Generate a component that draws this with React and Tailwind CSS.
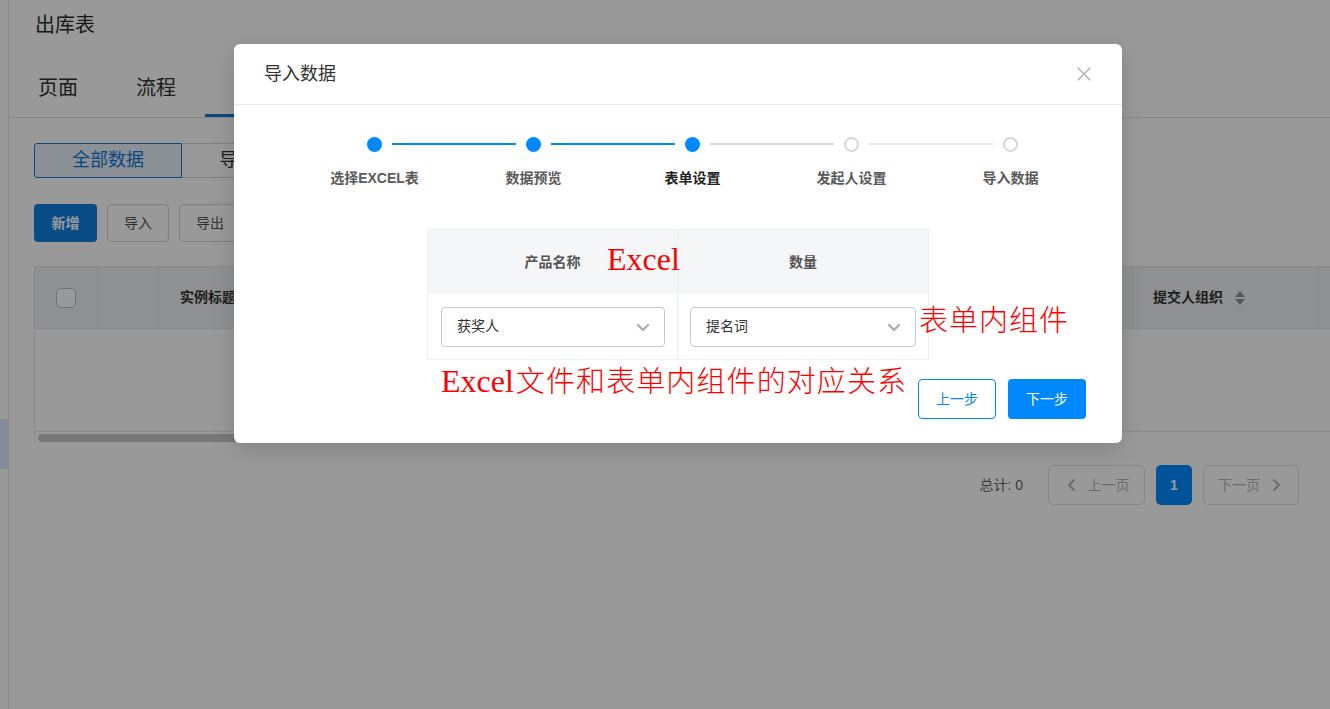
import React from "react";

const FONT = { fontFamily: '"Liberation Sans","Noto Sans CJK SC",sans-serif' };
const SERIF = { fontFamily: '"Liberation Serif",serif' };
const CJK = { fontFamily: '"Noto Sans CJK SC",sans-serif' };

function Chevron({ className = "", w = 2 }) {
  return (
    <svg className={className} width="16" height="16" viewBox="0 0 16 16" fill="none">
      <path d="M3 6l5 5 5-5" stroke="currentColor" strokeWidth={w} strokeLinecap="round" strokeLinejoin="round" />
    </svg>
  );
}

function Step({ state, label, line }) {
  return (
    <div className="relative flex w-[159px] flex-col items-center">
      <div className="relative flex h-[16px] w-full items-center justify-center">
        {state === "todo" ? (
          <div className="h-[15px] w-[15px] rounded-full border-2 border-[#d3d7dd] bg-white" />
        ) : (
          <div className="h-[15px] w-[15px] rounded-full bg-[#0089ff]" />
        )}
        {line && (
          <div className={`absolute left-[97px] top-[7px] h-[2px] w-[124px] ${line}`} />
        )}
      </div>
      <div
        className={`mt-[16px] text-[14px] font-bold leading-[20px] ${state === "current" ? "text-[#222]" : "text-[#5a5a5a]"}`}
      >
        {label}
      </div>
    </div>
  );
}

function Select({ value }) {
  return (
    <div className="flex h-[40px] w-full items-center justify-between rounded-[4px] border border-[#c3c9d2] bg-white pl-[15px] pr-[13px]">
      <span className="text-[14px] text-[#333]">{value}</span>
      <Chevron className="text-[#a9b0ba]" w={2.4} />
    </div>
  );
}

export default function App() {
  return (
    <div className="relative h-[709px] w-[1330px] overflow-hidden bg-white" style={FONT}>
      <div className="flex h-full">
        <aside className="flex w-[9px] flex-col border-r border-[#e6e6e6] bg-[#fdfdfd]">
          <div className="h-[419px]" />
          <div className="h-[50px] bg-[#dcecff]" />
        </aside>
        <main className="flex min-w-0 flex-1 flex-col">
          <div className="flex h-[50px] items-center pl-[26px] text-[20px] text-[#2a2a2a]">出库表</div>
          <div className="flex h-[68px] items-stretch border-b border-[#e4e4e4]">
            <div className="flex items-center px-[29px] pt-[8px] text-[20px] text-[#333]">页面</div>
            <div className="flex items-center px-[29px] pt-[8px] text-[20px] text-[#333]">流程</div>
            <div className="w-[98px] border-b-[3px] border-[#1677d2]" />
          </div>
          <div className="flex flex-col px-[25px]">
            <div className="mt-[25px] flex h-[35px]">
              <div className="flex w-[148px] items-center justify-center rounded-l-[3px] border border-[#1677d2] bg-[#e6f1fb] text-[18px] text-[#1677d2]">全部数据</div>
              <div className="flex w-[148px] items-center justify-center rounded-r-[3px] border border-l-0 border-[#d4d4d4] text-[18px] text-[#333]">导入记录</div>
            </div>
            <div className="mt-[26px] flex h-[38px] gap-[10px]">
              <div className="flex w-[63px] items-center justify-center rounded-[4px] bg-[#0f7fe0] text-[14px] font-bold text-white">新增</div>
              <div className="flex w-[62px] items-center justify-center rounded-[4px] border border-[#cfd3d8] text-[14px] text-[#555]">导入</div>
              <div className="flex w-[62px] items-center justify-center rounded-[4px] border border-[#cfd3d8] text-[14px] text-[#555]">导出</div>
            </div>
            <div className="mt-[24px] mr-[-25px] border-l border-[#e3e3e3]">
              <div className="flex h-[63px] border-y border-[#e3e3e3] bg-[#eef0f3]">
                <div className="flex w-[63px] items-center justify-center border-r border-[#e3e3e3]">
                  <div className="h-[20px] w-[20px] rounded-[5px] border border-[#b8bdc5] bg-white" />
                </div>
                <div className="w-[61px] border-r border-[#e3e3e3]" />
                <div className="flex w-[974px] items-center border-r border-[#e3e3e3] pl-[21px] text-[14px] font-bold text-[#333]">实例标题</div>
                <div className="flex w-[186px] items-center border-r border-[#e3e3e3] pl-[20px] text-[14px] font-bold text-[#333]">
                  提交人组织
                  <svg className="ml-[11px]" width="12" height="16" viewBox="0 0 12 16">
                    <path d="M6 1l5 6H1z" fill="#8a93a0" />
                    <path d="M6 15l5-6H1z" fill="#8a93a0" />
                  </svg>
                </div>
                <div className="flex-1" />
              </div>
              <div className="h-[103px] border-b border-[#e3e3e3]" />
              <div className="h-[11px] pl-[3px] pt-[2px]">
                <div className="h-[8px] w-[700px] rounded-full bg-[#c9c9c9]" />
              </div>
            </div>
            <div className="mt-[22px] flex h-[40px] items-center justify-end gap-[11px] pr-[6px]">
              <div className="mr-[14px] text-[14px] text-[#666]">总计: 0</div>
              <div className="flex h-[40px] w-[97px] items-center justify-center gap-[8px] rounded-[5px] border border-[#dcdfe4] text-[14px] text-[#b5b5b5]">
                <Chevron className="rotate-90" />
                上一页
              </div>
              <div className="flex h-[40px] w-[36px] items-center justify-center rounded-[5px] bg-[#0089ff] text-[14px] font-bold text-white">1</div>
              <div className="flex h-[40px] w-[96px] items-center justify-center gap-[8px] rounded-[5px] border border-[#dcdfe4] text-[14px] text-[#b5b5b5]">
                下一页
                <Chevron className="-rotate-90" />
              </div>
            </div>
          </div>
        </main>
      </div>

      {/* mask */}
      <div className="absolute inset-0 bg-black/40" />

      {/* modal */}
      <div className="absolute left-[234px] top-[44px] h-[399px] w-[888px] rounded-[6px] bg-white shadow-[0_6px_24px_rgba(0,0,0,0.15)]">
        <div className="flex h-[61px] items-center justify-between border-b border-[#e6e9ee] pl-[30px] pr-[30px]">
          <div className="text-[18px] text-[#333]">导入数据</div>
          <svg width="16" height="16" viewBox="0 0 16 16" fill="none">
            <path d="M2 2l12 12M14 2L2 14" stroke="#a7afba" strokeWidth="1.4" strokeLinecap="round" />
          </svg>
        </div>
        <div className="ml-[61px] mt-[31px] flex">
          <Step state="done" label="选择EXCEL表" line="bg-[#0089ff]" />
          <Step state="done" label="数据预览" line="bg-[#0089ff]" />
          <Step state="current" label="表单设置" line="bg-[#d3d7dd]" />
          <Step state="todo" label="发起人设置" line="bg-[#e4e7eb]" />
          <Step state="todo" label="导入数据" />
        </div>
        <div className="ml-[193px] mt-[41px] w-[502px] border border-[#edf0f3]">
          <div className="flex h-[64px] bg-[#f5f6f8]">
            <div className="flex w-[250px] items-center justify-center border-r border-[#edf0f3] text-[14px] font-bold text-[#555]">产品名称</div>
            <div className="flex flex-1 items-center justify-center text-[14px] font-bold text-[#555]">数量</div>
          </div>
          <div className="flex h-[65px]">
            <div className="flex w-[250px] items-center border-r border-[#edf0f3] pl-[13px] pr-[12px]">
              <Select value="获奖人" />
            </div>
            <div className="flex flex-1 items-center pl-[12px] pr-[12px]">
              <Select value="提名词" />
            </div>
          </div>
        </div>
        <div className="absolute bottom-[24px] right-[36px] flex gap-[12px]">
          <div className="flex h-[40px] w-[78px] items-center justify-center rounded-[4px] border border-[#0089ff] text-[14px] text-[#0089ff]">上一步</div>
          <div className="flex h-[40px] w-[78px] items-center justify-center rounded-[4px] bg-[#0089ff] text-[14px] text-white">下一步</div>
        </div>

        {/* annotations */}
        <div className="absolute left-[373px] top-[197px] text-[32px] leading-[36px] text-[#ff0000]" style={SERIF}>Excel</div>
        <div className="absolute left-[685px] top-[257px] text-[29px] font-light leading-[34px] tracking-[1px] text-[#ff0000]" style={CJK}>表单内组件</div>
        <div className="absolute left-[207px] top-[318px] flex items-baseline leading-[34px] text-[#ff0000]">
          <span className="text-[32px]" style={SERIF}>Excel</span>
          <span className="ml-[2px] text-[29px] font-light tracking-[1.1px]" style={CJK}>文件和表单内组件的对应关系</span>
        </div>
      </div>
    </div>
  );
}
